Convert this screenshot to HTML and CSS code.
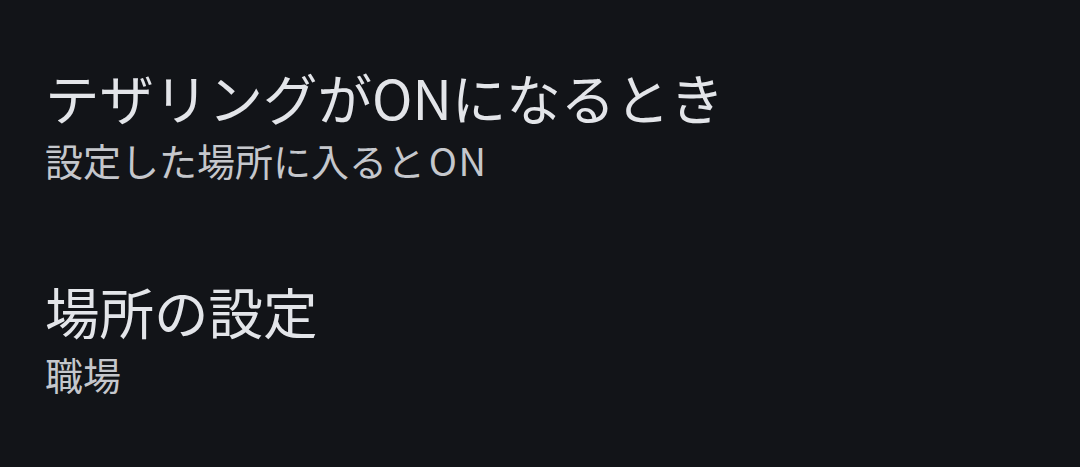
FILE: index.html
```html
<!DOCTYPE html>
<html lang="ja">
<head>
<meta charset="utf-8">
<link rel="stylesheet" href="styles.css">
<title>テザリング設定</title>
</head>
<body>
<main class="settings">
  <div class="pref">
    <div class="pref-title">テザリングがONになるとき</div>
    <div class="pref-summary">設定した場所に入ると<span class="latin">ON</span></div>
  </div>
  <div class="pref">
    <div class="pref-title">場所の設定</div>
    <div class="pref-summary">職場</div>
  </div>
</main>
</body>
</html>
```
FILE: styles.css
```css
html, body {
  margin: 0;
  padding: 0;
  background: #121418;
  height: 100%;
}

body {
  font-family: "Noto Sans CJK JP", "Noto Sans", sans-serif;
  overflow: hidden;
}

.settings {
  display: flex;
  flex-direction: column;
  gap: 96px;
  padding: 65px 0 0 45px;
}

.pref {
  display: flex;
  flex-direction: column;
  gap: 8px;
}

.pref-title {
  font-size: 54.5px;
  line-height: 64px;
  color: #e3e5e9;
}

.pref-summary {
  font-size: 38px;
  line-height: 46px;
  color: #c5c7cc;
}

.latin {
  margin-left: 0.1em;
  letter-spacing: 0.04em;
}
```
